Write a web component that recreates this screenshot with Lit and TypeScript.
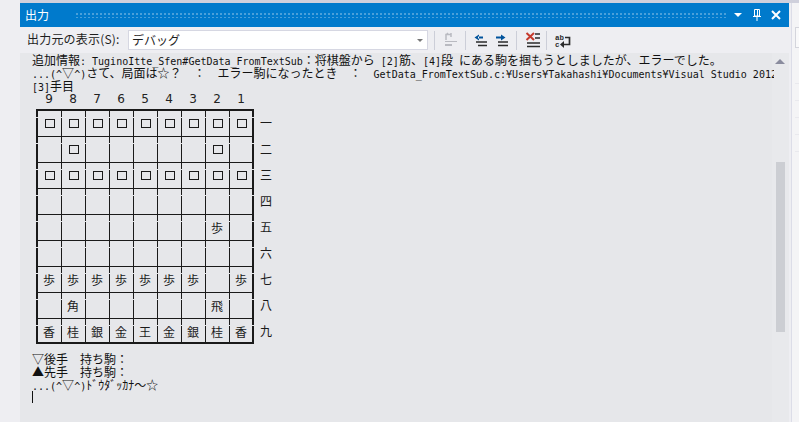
import { LitElement, html, css, svg } from "lit";
import { customElement } from "lit/decorators.js";

const cols = ["9", "8", "7", "6", "5", "4", "3", "2", "1"];
const S = "□";
const board: string[][] = [
  [S, S, S, S, S, S, S, S, S],
  ["", S, "", "", "", "", "", S, ""],
  [S, S, S, S, S, S, S, S, S],
  ["", "", "", "", "", "", "", "", ""],
  ["", "", "", "", "", "", "", "歩", ""],
  ["", "", "", "", "", "", "", "", ""],
  ["歩", "歩", "歩", "歩", "歩", "歩", "歩", "", "歩"],
  ["", "角", "", "", "", "", "", "飛", ""],
  ["香", "桂", "銀", "金", "王", "金", "銀", "桂", "香"],
];
const ranks = ["一", "二", "三", "四", "五", "六", "七", "八", "九"];

function mixed(text: string) {
  const parts = text.match(/[\x20-\x7e¥]+|[^\x20-\x7e¥]+/g) ?? [];
  return parts.map((p) =>
    /^[\x20-\x7e¥]/.test(p) ? html`<span class="l">${p}</span>` : html`<span class="c">${p}</span>`
  );
}

@customElement("app-root")
export class AppRoot extends LitElement {
  static styles = css`
    :host { display: block; width: 799px; height: 422px; overflow: hidden; background: #eeeef2; }
    .top { height: 3px; background: #cfd0dc; margin-left: 20px; }
    .frame { display: flex; height: 419px; }
    .gutter { width: 20px; flex: none; }
    .panel { width: 769px; flex: none; display: flex; flex-direction: column; }
    .side { flex: 1; background: #f4f4f6; border-left: 1px solid #dcdde8; margin-left: 2px; padding: 24px 0 0 3px; }
    .sidebox { height: 21px; background: #f9f9fa; border: 1px solid #d4d5dc; border-right: 0; box-sizing: border-box; }
    .sidelist { height: 100px; margin-top: 19px;
      background: repeating-linear-gradient(#f4f4f6 0 16px, #e9e9ee 16px 17px); }
    .title { height: 24px; background: #007acc; display: flex; align-items: center; color: #fff;
      font: 12px "Noto Sans CJK JP", sans-serif; padding-left: 5px; flex: none; }
    .title span { width: 24px; flex: none; white-space: nowrap; margin-top: -1px; }
    .grip { margin-left: 27px; width: 650px; height: 5px; flex: none;
      background-image: radial-gradient(circle at 1px 1px, #4aa0da 0.8px, transparent 1px);
      background-size: 4px 4px; }
    .tbtns { display: flex; align-items: center; margin-left: 8px; }
    .tbtns svg { display: block; }
    .toolbar { height: 26px; flex: none; display: flex; align-items: center; background: #eeeef2; padding-left: 7px;
      font: 12px "Noto Sans CJK JP", sans-serif; color: #1e1e1e; }
    .lab { width: 101px; flex: none; white-space: nowrap; margin-top: -3px; letter-spacing: 0.2px; }
    .combo { width: 300px; height: 20px; box-sizing: border-box; background: #fff; border: 1px solid #d6d7e2;
      display: flex; align-items: center; padding-left: 3px; flex: none; justify-content: space-between; }
    .combo span { margin-top: -2px; }
    .caret { width: 0; height: 0; border-left: 3px solid transparent; border-right: 3px solid transparent;
      border-top: 3px solid #777; margin-right: 4px; }
    .tools { display: flex; align-items: center; margin-left: 6px; }
    .sep { width: 1px; height: 19px; background: #ccced8; flex: none; }
    .tools svg { display: block; flex: none; }
    .out { flex: 1; background: #e6e7ea; position: relative; overflow: hidden; padding: 0 0 0 12px; color: #111; min-height: 0; }
    .line { height: 13px; line-height: 13px; white-space: nowrap; position: relative; }
    .line.clip { overflow-x: clip; width: 742px; }
    .l { font: 10px/13px "DejaVu Sans Mono", monospace; }
    .c { font: 12px/13px "Noto Sans CJK JP", sans-serif; }
    .cols { display: flex; padding-left: 5px; height: 13px; }
    .cols span { width: 24px; text-align: center; font: 12px/15px "DejaVu Sans", sans-serif; color: #222; }
    .boardwrap { display: flex; margin: 4px 0 0 4px; color: #1a1a1a; }
    .board { display: grid; grid-template-columns: 25px repeat(7, 24px) 25px;
      grid-template-rows: 25px repeat(8, 26px); box-sizing: border-box; width: 218px; height: 235px;
      border-top: 2px solid #1a1a1a; border-bottom: 2px solid #1a1a1a; }
    .cell { display: flex; align-items: center; justify-content: center; font: 12px "Noto Sans CJK JP", sans-serif;
      box-sizing: border-box; border-top: 1px solid #1a1a1a; padding-left: 2px;
      --seg: linear-gradient(#1a1a1a 0 6px, transparent 6px 7px, #1a1a1a 7px);
      background-image: var(--seg); background-size: 1px 100%; background-position: 0 0; background-repeat: no-repeat; }
    .cell.first-r { border-top: 0; }
    .cell.first-c { background-size: 2px 100%; padding-left: 3px; }
    .cell.last-c { background-image: var(--seg), var(--seg); background-size: 1px 100%, 2px 100%;
      background-position: 0 0, 100% 0; padding-left: 3px; padding-right: 2px; }
    .box { width: 10px; height: 9px; box-sizing: border-box; border: 1px solid #1a1a1a; }
    .piece { margin-left: -2px; }
    .ranks { display: grid; grid-auto-rows: 26px; margin: 1px 0 0 6px; font: 12px/26px "Noto Sans CJK JP", sans-serif; }
    .below { margin-top: 8px; }
    .cursor { width: 1px; height: 12px; background: #111; }
    .margin { position: absolute; left: 752px; top: 0; bottom: 0; width: 17px; background: #e8e9ec; }
    .thumb { position: absolute; left: 756px; top: 109px; width: 9px; height: 170px; background: #ccced3; }
    .arrow { position: absolute; left: 755px; top: 6px; width: 0; height: 0;
      border-left: 5px solid transparent; border-right: 5px solid transparent; border-bottom: 5px solid #8a8c9e; }
  `;

  render() {
    return html`
      <div class="top"></div>
      <div class="frame">
        <div class="gutter"></div>
        <div class="panel">
          <div class="title">
            <span>出力</span>
            <div class="grip"></div>
            <div class="tbtns">
              <svg width="55" height="16" viewBox="0 0 55 16">
                <path d="M0 6h8l-4 4z" fill="#fff"/>
                <path d="M20.500 2.500h5v6.500h-5zM23.500 3v6" fill="none" stroke="#fff"/>
                <path d="M19 9.500h8M23 9v5" fill="none" stroke="#fff"/>
                <path d="M38 4l8 8M46 4l-8 8" stroke="#fff" stroke-width="2" fill="none"/>
              </svg>
            </div>
          </div>
          <div class="toolbar">
            <div class="lab">出力元の表示(S):</div>
            <div class="combo"><span>デバッグ</span><i class="caret"></i></div>
            <div class="tools">
              <div class="sep"></div>
              <svg width="30" height="19" viewBox="0 0 30 19">${svg`
                <path d="M11 9V3.500h5M13 2l-2.500 2.500M16 2v4" fill="none" stroke="#b9bac1" stroke-width="1.500"/>
                <path d="M10 10.500h12" stroke="#b9bac1" stroke-width="1"/>
                <path d="M10 14h7" stroke="#b9bac1" stroke-width="2"/>`}</svg>
              <div class="sep"></div>
              <svg width="50" height="19" viewBox="0 0 50 19">${svg`
                <path d="M13 3.500L8.500 6.500l4.500 3zM12 5.500h5v2h-5z" fill="#00539c"/>
                <path d="M10 11h11M12 14.500h9" stroke="#2b2b2b" stroke-width="1.700"/>
                <path d="M35 3.500l4.500 3-4.500 3zM30 5.500h6v2h-6z" fill="#00539c"/>
                <path d="M32 11h10M32 14.500h10" stroke="#2b2b2b" stroke-width="1.700"/>`}</svg>
              <div class="sep"></div>
              <svg width="29" height="19" viewBox="0 0 29 19">${svg`
                <path d="M9.500 2l7.500 7M17 2l-7.500 7" stroke="#c53a2d" stroke-width="2" fill="none"/>
                <path d="M18 3h5M18 7h5M10 12h13M10 15.500h13" stroke="#2b2b2b" stroke-width="1.600"/>`}</svg>
              <div class="sep"></div>
              <svg width="30" height="19" viewBox="0 0 30 19">${svg`
                <text x="8" y="9" font-family="Liberation Mono" font-size="7.500" font-weight="700" fill="#2b2b2b">ab</text>
                <text x="8" y="15.500" font-family="Liberation Mono" font-size="7.500" font-weight="700" fill="#2b2b2b">c</text>
                <path d="M18 6.500h4.500v7h-6" stroke="#2b2b2b" stroke-width="1.700" fill="none"/>
                <path d="M13 13.500l4-3.500v7z" fill="#2b2b2b"/>`}</svg>
            </div>
          </div>
          <div class="out">
            <div class="margin"></div>
            <div class="line">${mixed("追加情報: TuginoItte_Sfen#GetData_FromTextSub：将棋盤から [2]筋、[4]段 にある駒を掴もうとしましたが、エラーでした。")}</div>
            <div class="line clip">${mixed("...(^▽^)さて、局面は☆？　：　エラー駒になったとき　：　GetData_FromTextSub.c:¥Users¥Takahashi¥Documents¥Visual Studio 2012")}</div>
            <div class="line">${mixed("[3]手目")}</div>
            <div class="cols">${cols.map((c) => html`<span>${c}</span>`)}</div>
            <div class="boardwrap">
              <div class="board">
                ${board.map((row, r) =>
                  row.map(
                    (p, c) => html`<div class="cell ${r === 0 ? "first-r" : ""} ${c === 0 ? "first-c" : ""} ${c === 8 ? "last-c" : ""}">${
                      p === S ? html`<i class="box"></i>` : p ? html`<span class="piece">${p}</span>` : ""
                    }</div>`
                  )
                )}
              </div>
              <div class="ranks">${ranks.map((x) => html`<span>${x}</span>`)}</div>
            </div>
            <div class="below">
              <div class="line">${mixed("▽後手　持ち駒：")}</div>
              <div class="line">${mixed("▲先手　持ち駒：")}</div>
              <div class="line">${mixed("...(^▽^)ﾄﾞｳﾀﾞｯｶﾅ～☆")}</div>
              <div class="cursor"></div>
            </div>
            <div class="arrow"></div>
            <div class="thumb"></div>
          </div>
        </div>
        <div class="side">
          <div class="sidebox"></div>
          <div class="sidelist"></div>
        </div>
      </div>
    `;
  }
}
